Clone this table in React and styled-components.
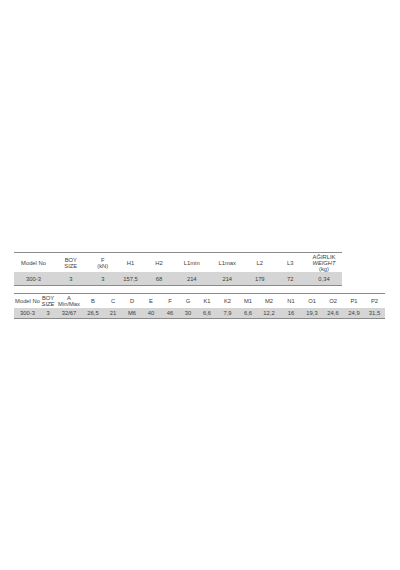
import React from "react";
import styled, { createGlobalStyle } from "styled-components";

const Global = createGlobalStyle`
  html, body { margin: 0; padding: 0; background: #fff; }
  body { font-family: "Liberation Sans", Arial, sans-serif; }
`;

const Page = styled.div`
  width: 400px;
  height: 570px;
  padding: 252px 0 0 14px;
  box-sizing: border-box;
  display: flex;
  flex-direction: column;
  gap: 7px;
`;

const Table = styled.div`
  display: grid;
  grid-template-columns: ${(p) => p.$cols};
  width: ${(p) => p.$width}px;
  border-top: 1px solid #8a8a8a;
  border-bottom: 1px solid #8a8a8a;
  color: #3e3e3e;
  font-size: 5.8px;
`;

const HeadCell = styled.div`
  height: ${(p) => p.$h}px;
  display: flex;
  flex-direction: column;
  align-items: center;
  justify-content: center;
  text-align: center;
  line-height: 6px;
  white-space: nowrap;
`;

const Line = styled.span`
  font-style: ${(p) => (p.$italic ? "italic" : "normal")};
`;

const DataCell = styled.div`
  height: ${(p) => p.$h}px;
  background: #d5d5d5;
  display: flex;
  align-items: center;
  justify-content: center;
  white-space: nowrap;
`;

const t1Cols = [39, 35.5, 28.5, 27, 30, 35.5, 35.5, 29.5, 31.5, 36];
const t1Head = [
  [["Model No"]],
  [["BOY"], ["SIZE"]],
  [["F"], ["(kN)"]],
  [["H1"]],
  [["H2"]],
  [["L1min"]],
  [["L1max"]],
  [["L2"]],
  [["L3"]],
  [["AĞIRLIK"], ["WEIGHT", true], ["(kg)"]],
];
const t1Data = ["300-3", "3", "3", "157,5", "68", "214", "214", "179", "72", "0,34"];

const t2Cols = [27, 14, 28, 20, 20, 18, 20, 18, 18, 20, 21, 20, 22, 22, 20, 22, 20, 21];
const t2Head = [
  [["Model No"]],
  [["BOY"], ["SIZE", true]],
  [["A"], ["Min/Max"]],
  ..."B C D E F G K1 K2 M1 M2 N1 O1 O2 P1 P2".split(" ").map((s) => [[s]]),
];
const t2Data = ["300-3", "3", "32/67", "26,5", "21", "M6", "40", "46", "30", "6,6", "7,9", "6,6", "12,2", "16", "19,3", "24,6", "24,9", "31,5"];

function SpecTable({ cols, head, data, headH, dataH }) {
  const width = cols.reduce((a, b) => a + b, 0);
  return (
    <Table $cols={cols.map((c) => `${c}px`).join(" ")} $width={width}>
      {head.map((lines, i) => (
        <HeadCell key={`h${i}`} $h={headH}>
          {lines.map(([txt, it], j) => (
            <Line key={j} $italic={it}>{txt}</Line>
          ))}
        </HeadCell>
      ))}
      {data.map((d, i) => (
        <DataCell key={`d${i}`} $h={dataH}>{d}</DataCell>
      ))}
    </Table>
  );
}

export default function App() {
  return (
    <>
      <Global />
      <Page>
        <SpecTable cols={t1Cols} head={t1Head} data={t1Data} headH={19} dataH={13} />
        <SpecTable cols={t2Cols} head={t2Head} data={t2Data} headH={14} dataH={10} />
      </Page>
    </>
  );
}
